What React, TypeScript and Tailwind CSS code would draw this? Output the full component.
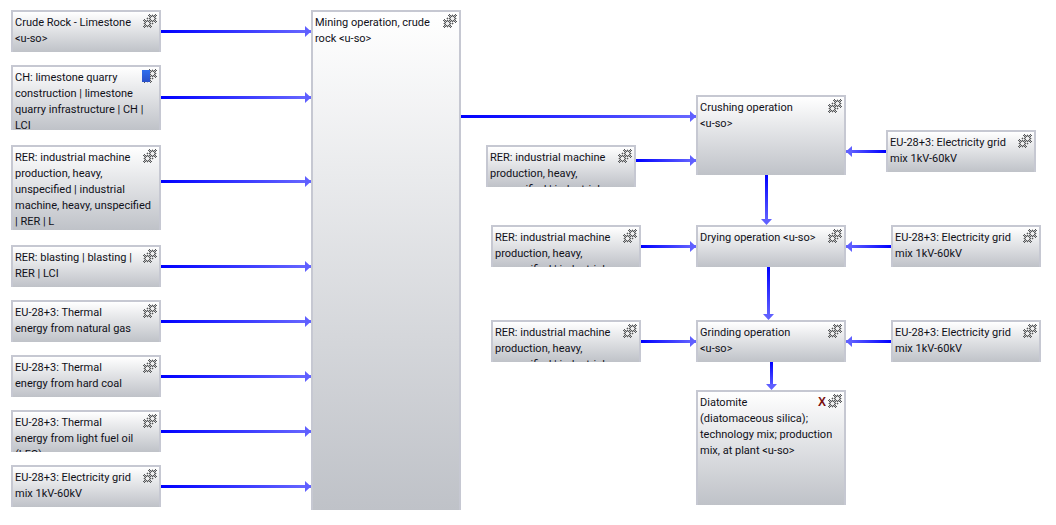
type NodeBox = { x: number; y: number; h: number; text: string; badge?: "blue" | "x" };

const nodes: NodeBox[] = [
  { x: 11, y: 10, h: 42, text: "Crude Rock - Limestone <u-so>" },
  { x: 11, y: 65, h: 65, text: "CH: limestone quarry construction | limestone quarry infrastructure | CH | LCI", badge: "blue" },
  { x: 11, y: 145, h: 85, text: "RER: industrial machine production, heavy, unspecified | industrial machine, heavy, unspecified | RER | L" },
  { x: 11, y: 245, h: 42, text: "RER: blasting | blasting | RER | LCI" },
  { x: 11, y: 300, h: 42, text: "EU-28+3: Thermal energy from natural gas" },
  { x: 11, y: 355, h: 42, text: "EU-28+3: Thermal energy from hard coal" },
  { x: 11, y: 410, h: 42, text: "EU-28+3: Thermal energy from light fuel oil (LFO)" },
  { x: 11, y: 465, h: 42, text: "EU-28+3: Electricity grid mix 1kV-60kV" },
  { x: 311, y: 10, h: 500, text: "Mining operation, crude rock <u-so>" },
  { x: 696, y: 95, h: 80, text: "Crushing operation <u-so>" },
  { x: 486, y: 145, h: 42, text: "RER: industrial machine production, heavy, unspecified | industrial" },
  { x: 886, y: 130, h: 42, text: "EU-28+3: Electricity grid mix 1kV-60kV" },
  { x: 696, y: 225, h: 42, text: "Drying operation <u-so>" },
  { x: 491, y: 225, h: 42, text: "RER: industrial machine production, heavy, unspecified | industrial" },
  { x: 891, y: 225, h: 42, text: "EU-28+3: Electricity grid mix 1kV-60kV" },
  { x: 696, y: 320, h: 42, text: "Grinding operation <u-so>" },
  { x: 491, y: 320, h: 42, text: "RER: industrial machine production, heavy, unspecified | industrial" },
  { x: 891, y: 320, h: 42, text: "EU-28+3: Electricity grid mix 1kV-60kV" },
  { x: 696, y: 390, h: 115, text: "Diatomite (diatomaceous silica); technology mix; production mix, at plant <u-so>", badge: "x" },
];

// x1,y1 -> x2,y2, the tip is at x2,y2
const arrows = [
  [161, 31, 311, 31],
  [161, 97, 311, 97],
  [161, 181, 311, 181],
  [161, 266, 311, 266],
  [161, 321, 311, 321],
  [161, 376, 311, 376],
  [161, 431, 311, 431],
  [161, 486, 311, 486],
  [461, 116, 696, 116],
  [636, 160, 696, 160],
  [886, 151, 846, 151],
  [766, 175, 766, 225],
  [641, 246, 696, 246],
  [891, 246, 846, 246],
  [768, 267, 768, 320],
  [641, 341, 696, 341],
  [891, 341, 846, 341],
  [771, 362, 771, 390],
];

// the reference icon is a small dithered bitmap, so it is drawn pixel by pixel
const gearPixels = (cx: number, cy: number) => {
  const out: { x: number; y: number; fill: string }[] = [];
  for (let y = 0; y < 14; y++) {
    for (let x = 0; x < 14; x++) {
      const dx = x + 0.5 - cx;
      const dy = y + 0.5 - cy;
      const d = Math.hypot(dx, dy);
      const angle = (Math.atan2(dy, dx) * 180) / Math.PI + 360;
      const onTooth = angle % 45 < 14 || angle % 45 > 31;
      if (d > (onTooth ? 5.2 : 3.9)) continue;
      if (d < 1.5) out.push({ x, y, fill: "#eeeeee" });
      else out.push({ x, y, fill: (x + y) % 2 === 0 ? "#55575a" : "#c2c2c2" });
    }
  }
  return out;
};

const gearRects = [...gearPixels(4.5, 9.5), ...gearPixels(9.5, 4.5)];

const GearIcon = () => (
  <svg width="14" height="14" viewBox="0 0 14 14" className="block" shapeRendering="crispEdges">
    {gearRects.map((p, i) => (
      <rect key={i} x={p.x} y={p.y} width="1" height="1" fill={p.fill} />
    ))}
  </svg>
);

// keeps <u-so> from breaking at its hyphen
const NodeText = ({ text }: { text: string }) => {
  const tag = "<u-so>";
  if (!text.endsWith(tag)) return <>{text}</>;
  return (
    <>
      {text.slice(0, -tag.length)}
      <span className="whitespace-nowrap">{tag}</span>
    </>
  );
};

const Node = ({ node }: { node: NodeBox }) => (
  <div
    className="absolute w-[150px] overflow-hidden border-2 border-b-0 border-[#c6c8d2] bg-gradient-to-b from-white to-[#bfc2c8]"
    style={{ left: node.x, top: node.y, height: node.h }}
  >
    <div className="relative float-right ml-[6px] mr-[2px] mt-[2px] flex items-start">
      {node.badge === "x" && (
        <span className="mr-[2px] mt-[1px] font-['Liberation_Sans',sans-serif] text-[12px] font-bold leading-[14px] text-[#7a1010]">
          X
        </span>
      )}
      <GearIcon />
      {node.badge === "blue" && (
        <div className="absolute left-[-1px] top-[1px] h-3 w-2 bg-gradient-to-b from-[#2f6fee] to-[#2a50c8]" />
      )}
    </div>
    <p className="pl-[2px] pr-[6px] pt-[3px] font-['Roboto',sans-serif] text-[11px] leading-[16px] text-[#101018]">
      <NodeText text={node.text} />
    </p>
  </div>
);

const Arrow = ({ a, i }: { a: number[]; i: number }) => {
  const [x1, y1, x2, y2] = a;
  const horizontal = y1 === y2;
  const dir = horizontal ? Math.sign(x2 - x1) : Math.sign(y2 - y1);
  const head = horizontal
    ? `${x2},${y2 + 0.5} ${x2 - dir * 6},${y2 - 5} ${x2 - dir * 6},${y2 + 6}`
    : `${x2 + 0.5},${y2} ${x2 - 5},${y2 - dir * 6} ${x2 + 6},${y2 - dir * 6}`;
  return (
    <g>
      <defs>
        <linearGradient id={`arrow${i}`} gradientUnits="userSpaceOnUse" x1={x1} y1={y1} x2={x2} y2={y2}>
          <stop offset="0" stopColor="#0000ff" />
          <stop offset="1" stopColor="#6a6aff" />
        </linearGradient>
      </defs>
      <rect
        x={Math.min(x1, x2) - (horizontal ? 0 : 1)}
        y={Math.min(y1, y2) - (horizontal ? 1 : 0)}
        width={horizontal ? Math.abs(x2 - x1) : 3}
        height={horizontal ? 3 : Math.abs(y2 - y1) - 3}
        fill={`url(#arrow${i})`}
      />
      <polygon points={head} fill="#5f5fff" />
    </g>
  );
};

export default function App() {
  return (
    <div className="relative h-[525px] w-[1056px] overflow-hidden bg-white">
      {nodes.map((n, i) => (
        <Node key={i} node={n} />
      ))}
      <svg width="1056" height="525" className="absolute left-0 top-0">
        {arrows.map((a, i) => (
          <Arrow key={i} a={a} i={i} />
        ))}
      </svg>
    </div>
  );
}
